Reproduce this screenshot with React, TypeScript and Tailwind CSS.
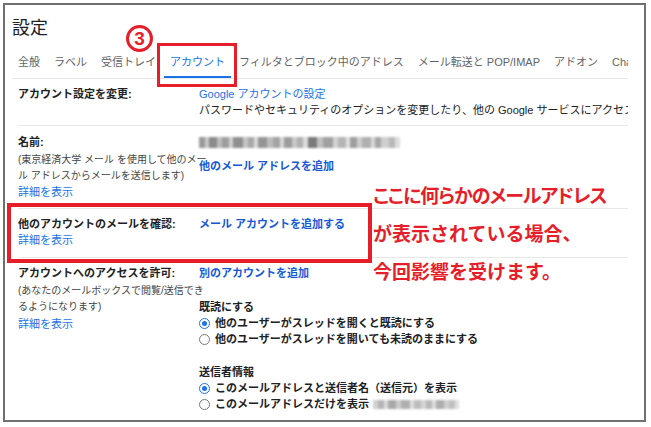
import React from "react";

type Block = [number, string];

const nameBlur: Block[] = [
  [6, "#9a9a9a"], [4, "#c8c8c8"], [8, "#8a8a8a"], [5, "#bdbdbd"], [7, "#9d9d9d"], [4, "#d0d0d0"],
  [10, "#8f8f8f"], [5, "#c4c4c4"], [6, "#a8a8a8"], [4, "#dadada"], [9, "#959595"], [6, "#bcbcbc"],
  [7, "#a4a4a4"], [4, "#d8d8d8"], [8, "#9c9c9c"], [5, "#c9c9c9"], [6, "#b0b0b0"], [5, "#dcdcdc"],
  [9, "#7a7a7a"], [6, "#c0c0c0"], [10, "#a0a0a0"], [5, "#d2d2d2"], [8, "#b5b5b5"], [4, "#e0e0e0"],
  [7, "#9e9e9e"], [5, "#cdcdcd"], [9, "#b0b0b0"], [4, "#d8d8d8"], [6, "#a6a6a6"], [8, "#cfcfcf"],
  [6, "#b8b8b8"], [5, "#dddddd"],
];

const addrBlur: Block[] = [
  [5, "#d0d0d0"], [6, "#b5b5b5"], [4, "#dadada"], [8, "#a8a8a8"], [5, "#cccccc"], [9, "#b0b0b0"],
  [4, "#dedede"], [7, "#bcbcbc"], [5, "#d4d4d4"], [6, "#b8b8b8"], [4, "#dddddd"], [8, "#adadad"],
  [5, "#cfcfcf"], [6, "#c0c0c0"], [4, "#e0e0e0"],
];

function Blur({ blocks, className }: { blocks: Block[]; className?: string }) {
  return (
    <div className={"flex blur-[1.3px] " + (className ?? "")}>
      {blocks.map(([w, c], i) => (
        <div key={i} style={{ width: w, backgroundColor: c }} />
      ))}
    </div>
  );
}

function Radio({ checked, children }: { checked?: boolean; children: React.ReactNode }) {
  return (
    <div className="flex items-center h-[16px] whitespace-nowrap">
      {checked ? (
        <span className="w-[11px] h-[11px] rounded-full border border-[#1a73e8] flex items-center justify-center shrink-0">
          <span className="w-[5px] h-[5px] rounded-full bg-[#1a73e8]" />
        </span>
      ) : (
        <span className="w-[11px] h-[11px] rounded-full border border-[#7a7a7a] shrink-0" />
      )}
      <span className="ml-[5px] text-[11px] font-semibold text-[#202124] flex items-center">{children}</span>
    </div>
  );
}

function Tab({ children, active }: { children: React.ReactNode; active?: boolean }) {
  return active ? (
    <div className="px-[6px] pt-[14px] pb-[6px] border-b-2 border-[#1a73e8] text-[11px] leading-[16px] text-[#1a73e8] whitespace-nowrap">
      {children}
    </div>
  ) : (
    <div className="px-[6px] pt-[14px] pb-[6px] border-b-2 border-transparent text-[11px] leading-[16px] text-[#5f6368] whitespace-nowrap">
      {children}
    </div>
  );
}

export default function App() {
  return (
    <div className="relative w-[651px] h-[427px] bg-white p-[3px] overflow-hidden font-['Liberation_Sans','Noto_Sans_CJK_JP',sans-serif]">
      <div className="w-[643px] h-[419px] border-2 border-[#707070] pl-[7px]">
        <div className="w-[616px] overflow-hidden">
          <div className="pt-[11px] text-[18px] leading-[24px] text-[#202124]">設定</div>

          <div className="flex gap-[2px] border-b border-[#e8e8e8]">
            <Tab>全般</Tab>
            <Tab>ラベル</Tab>
            <Tab>受信トレイ</Tab>
            <Tab active>アカウント</Tab>
            <Tab>フィルタとブロック中のアドレス</Tab>
            <Tab>メール転送と POP/IMAP</Tab>
            <Tab>アドオン</Tab>
            <Tab>Chat と Meet</Tab>
          </div>

          <div className="ml-[5px] pl-[1px] text-[11px] leading-[16px] text-[#202124]">
            {/* Row 1 */}
            <div className="flex h-[47px] border-b border-[#e8e8e8]">
              <div className="w-[181px] shrink-0 pt-[7px] font-bold">アカウント設定を変更:</div>
              <div className="pt-[7px] whitespace-nowrap">
                <div className="text-[#1a73e8]">Google アカウントの設定</div>
                <div>パスワードやセキュリティのオプションを変更したり、他の Google サービスにアクセスしたりできます</div>
              </div>
            </div>

            {/* Row 2 */}
            <div className="flex h-[83px] border-b border-[#e8e8e8]">
              <div className="w-[181px] shrink-0 pt-[8px]">
                <div className="font-bold">名前:</div>
                <div className="mt-[2px] text-[10px] text-[#444] whitespace-nowrap">(東京経済大学 メール を使用して他のメー</div>
                <div className="text-[10px] text-[#444] whitespace-nowrap">ル アドレスからメールを送信します)</div>
                <div className="text-[#1a73e8]">詳細を表示</div>
              </div>
              <div className="pt-[11px] whitespace-nowrap">
                <Blur blocks={nameBlur} className="h-[11px] w-[236px]" />
                <div className="mt-[10px] font-bold text-[#1558d6]">他のメール アドレスを追加</div>
              </div>
            </div>

            {/* Row 3 */}
            <div className="flex h-[49px] border-b border-[#e8e8e8]">
              <div className="w-[181px] shrink-0 pt-[7px]">
                <div className="font-bold">他のアカウントのメールを確認:</div>
                <div className="text-[#1a73e8]">詳細を表示</div>
              </div>
              <div className="pt-[7px] font-bold text-[#1558d6] whitespace-nowrap">メール アカウントを追加する</div>
            </div>

            {/* Row 4 */}
            <div className="flex">
              <div className="w-[181px] shrink-0 pt-[7px]">
                <div className="font-bold">アカウントへのアクセスを許可:</div>
                <div className="mt-[2px] text-[10px] text-[#444] whitespace-nowrap">(あなたのメールボックスで閲覧/送信でき</div>
                <div className="text-[10px] text-[#444] whitespace-nowrap">るようになります)</div>
                <div className="mt-[1px] text-[#1a73e8]">詳細を表示</div>
              </div>
              <div className="pt-[7px]">
                <div className="font-bold text-[#1558d6]">別のアカウントを追加</div>
                <div className="mt-[18px] font-bold">既読にする</div>
                <Radio checked>他のユーザーがスレッドを開くと既読にする</Radio>
                <Radio>他のユーザーがスレッドを開いても未読のままにする</Radio>
                <div className="mt-[17px] font-bold">送信者情報</div>
                <Radio checked>このメールアドレスと送信者名（送信元）を表示</Radio>
                <Radio>
                  このメールアドレスだけを表示
                  <Blur blocks={addrBlur} className="ml-[4px] h-[9px] w-[88px]" />
                </Radio>
              </div>
            </div>
          </div>
        </div>
      </div>

      {/* Annotations */}
      <div className="absolute left-[126px] top-[25px] w-[27px] h-[27px] rounded-full border-[3px] border-[#e61e2a] flex items-center justify-center text-[19px] leading-none font-bold text-[#e61e2a]">
        3
      </div>
      <div className="absolute left-[157px] top-[43px] w-[80px] h-[44px] border-[3px] border-[#e61e2a]" />
      <div className="absolute left-[7px] top-[203px] w-[365px] h-[60px] border-[4px] border-[#e61e2a]" />
      <div className="absolute left-[373px] top-[176px] text-[19px] leading-[38px] font-bold text-[#e61e2a] whitespace-nowrap font-['Noto_Sans_CJK_JP',sans-serif]">
        <div className="[font-feature-settings:'palt'] tracking-[-1px]">ここに何らかのメールアドレス</div>
        <div>が表示されている場合、</div>
        <div>今回影響を受けます。</div>
      </div>
    </div>
  );
}
